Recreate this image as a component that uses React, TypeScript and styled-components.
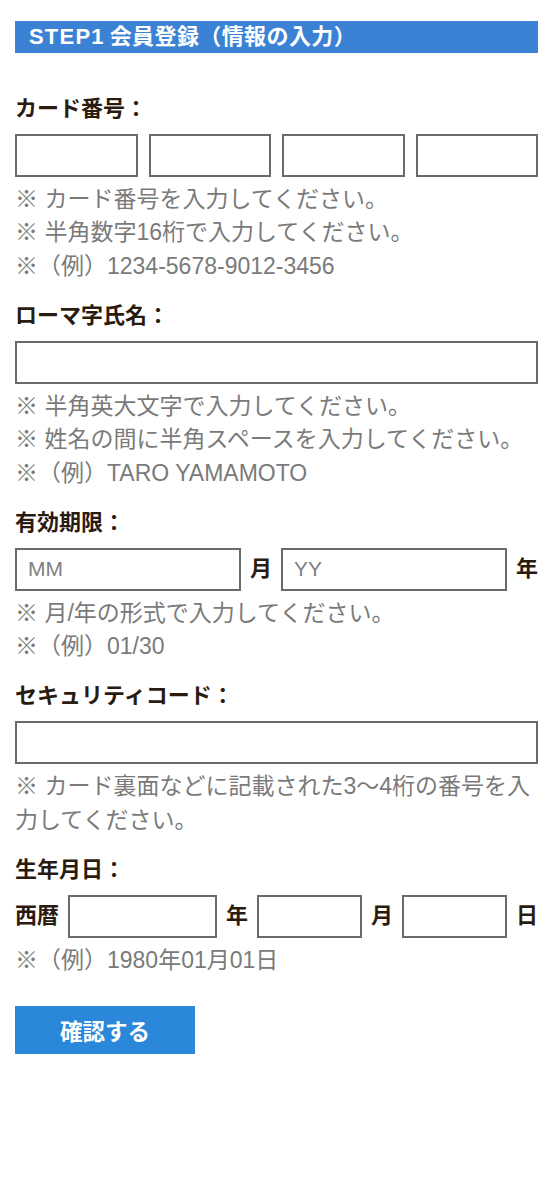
import styled, { createGlobalStyle } from "styled-components";

const GlobalStyle = createGlobalStyle`
  html, body {
    margin: 0;
    padding: 0;
    background: #fff;
  }
  body {
    font-family: "Liberation Sans", "Noto Sans CJK JP", sans-serif;
    color: #2a1b10;
  }
`;

// styled components
const Page = styled.div`
  padding: 21px 16px 40px 15px;
`;

const StepHeader = styled.h2`
  margin: 0;
  height: 32px;
  padding-left: 14px;
  background: #3b82d5;
  color: #fff;
  font-size: 22px;
  font-weight: 700;
  line-height: 32px;
  letter-spacing: 0.4px;
  white-space: nowrap;
`;

const StepNo = styled.span`
  margin-right: 5px;
  letter-spacing: 1.2px;
`;

const Form = styled.form`
  display: flex;
  flex-direction: column;
  gap: 15.5px;
  margin-top: 38.5px;
`;

const Field = styled.div`
  display: flex;
  flex-direction: column;
`;

const FieldLabel = styled.label`
  margin-bottom: 9px;
  font-size: 22px;
  font-weight: 700;
  line-height: 33px;
  color: #2a1b10;
`;

const InputRow = styled.div<{ $gap: number }>`
  display: flex;
  align-items: center;
  gap: ${(p) => p.$gap}px;
`;

const TextBox = styled.input<{ $grow?: number }>`
  flex: ${(p) => p.$grow ?? 1} 1 0;
  min-width: 0;
  box-sizing: border-box;
  height: 43px;
  margin: 0;
  padding: 0 11px;
  border: 2px solid #6a6a6a;
  border-radius: 0;
  background: #fff;
  font-family: inherit;
  font-size: 21px;
  color: #333;
  outline: none;

  &::placeholder {
    color: #808080;
  }
`;

const Unit = styled.span`
  flex: none;
  font-size: 22px;
  font-weight: 700;
  line-height: 1;
  color: #2a1b10;
`;

const Notes = styled.div`
  margin-top: 6px;
`;

const Note = styled.p`
  margin: 0;
  font-size: 23px;
  line-height: 33.5px;
  color: #7a7a7a;
`;

const SubmitButton = styled.button`
  align-self: flex-start;
  width: 180px;
  height: 48px;
  margin-top: 13px;
  border: none;
  border-radius: 0;
  background: #2b87d9;
  color: #fff;
  font-family: inherit;
  font-size: 22.5px;
  font-weight: 700;
  cursor: pointer;
`;

export default function App() {
  return (
    <Page>
      <GlobalStyle />
      <StepHeader>
        <StepNo>STEP1</StepNo>会員登録（情報の入力）
      </StepHeader>

      <Form onSubmit={(e) => e.preventDefault()}>
        <Field>
          <FieldLabel>カード番号：</FieldLabel>
          <InputRow $gap={11}>
            <TextBox inputMode="numeric" maxLength={4} />
            <TextBox inputMode="numeric" maxLength={4} />
            <TextBox inputMode="numeric" maxLength={4} />
            <TextBox inputMode="numeric" maxLength={4} />
          </InputRow>
          <Notes>
            <Note>※ カード番号を入力してください。</Note>
            <Note>※ 半角数字16桁で入力してください。</Note>
            <Note>※（例）1234-5678-9012-3456</Note>
          </Notes>
        </Field>

        <Field>
          <FieldLabel>ローマ字氏名：</FieldLabel>
          <InputRow $gap={0}>
            <TextBox />
          </InputRow>
          <Notes>
            <Note>※ 半角英大文字で入力してください。</Note>
            <Note>※ 姓名の間に半角スペースを入力してください。</Note>
            <Note>※（例）TARO YAMAMOTO</Note>
          </Notes>
        </Field>

        <Field>
          <FieldLabel>有効期限：</FieldLabel>
          <InputRow $gap={9}>
            <TextBox placeholder="MM" maxLength={2} />
            <Unit>月</Unit>
            <TextBox placeholder="YY" maxLength={2} />
            <Unit>年</Unit>
          </InputRow>
          <Notes>
            <Note>※ 月/年の形式で入力してください。</Note>
            <Note>※（例）01/30</Note>
          </Notes>
        </Field>

        <Field>
          <FieldLabel>セキュリティコード：</FieldLabel>
          <InputRow $gap={0}>
            <TextBox inputMode="numeric" maxLength={4} />
          </InputRow>
          <Notes>
            <Note>※ カード裏面などに記載された3〜4桁の番号を入力してください。</Note>
          </Notes>
        </Field>

        <Field>
          <FieldLabel>生年月日：</FieldLabel>
          <InputRow $gap={9}>
            <Unit>西暦</Unit>
            <TextBox $grow={14} maxLength={4} />
            <Unit>年</Unit>
            <TextBox $grow={9} maxLength={2} />
            <Unit>月</Unit>
            <TextBox $grow={9} maxLength={2} />
            <Unit>日</Unit>
          </InputRow>
          <Notes>
            <Note>※（例）1980年01月01日</Note>
          </Notes>
        </Field>

        <SubmitButton type="submit">確認する</SubmitButton>
      </Form>
    </Page>
  );
}
